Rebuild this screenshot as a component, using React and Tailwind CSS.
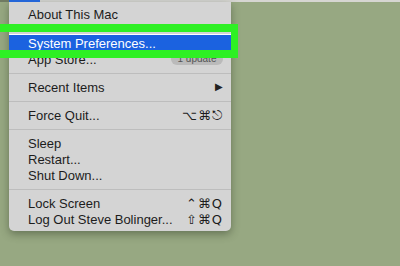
import React from 'react';

const font = { fontFamily: '"Liberation Sans", Arial, sans-serif' };

function Item({ label, right, active }) {
  return (
    <div
      className={`flex items-center justify-between h-4 pl-[19px] pr-[8px] text-[13px] leading-none ${
        active ? 'bg-[#1b62e0] text-white' : 'text-[#1c1c1c]'
      }`}
    >
      <span>{label}</span>
      {right}
    </div>
  );
}

function Sep() {
  return (
    <div className="h-3 flex items-center">
      <div className="h-px w-full bg-[#bdbdbd]" />
    </div>
  );
}

const Keys = ({ children }) => (
  <span
    className="text-[13px] tracking-[1px] text-[#1c1c1c]"
    style={{ fontFamily: '"DejaVu Sans", "Liberation Sans", sans-serif' }}
  >
    {children}
  </span>
);

export default function App() {
  return (
    <div className="relative w-[400px] h-[266px] overflow-hidden bg-[#97a882]" style={font}>
      {/* menu bar edge */}
      <div className="flex h-[2px] bg-[#d6d6d2]">
        <div className="w-[9px] bg-[#6f7a62]" />
        <div className="w-[31px] bg-[#2466d8]" />
      </div>

      {/* Apple menu */}
      <div className="ml-[9px] w-[222px] pt-1 pb-1 bg-[#d4d4d4] rounded-b-[5px] shadow-[0_3px_8px_rgba(40,50,30,0.45)]">
        <Item label="About This Mac" />
        <Sep />
        <div className="border-t border-white">
          <Item label="System Preferences..." active />
        </div>
        <Item
          label="App Store..."
          right={
            <span className="h-3 w-[52px] rounded-full bg-[#bababa] text-[10px] leading-3 text-center text-[#555]">
              1 update
            </span>
          }
        />
        <Sep />
        <Item label="Recent Items" right={<span className="text-[10px] text-[#222]">▶</span>} />
        <Sep />
        <Item label="Force Quit..." right={<Keys>⌥⌘⎋</Keys>} />
        <Sep />
        <Item label="Sleep" />
        <Item label="Restart..." />
        <Item label="Shut Down..." />
        <Sep />
        <Item label="Lock Screen" right={<Keys>⌃⌘Q</Keys>} />
        <Item label="Log Out Steve Bolinger..." right={<Keys>⇧⌘Q</Keys>} />
      </div>

      {/* green annotation frame */}
      <div className="absolute left-[-10px] top-[24px] w-[248px] h-[34px] border-[8px] border-r-[7px] border-[#2ef024]" />
    </div>
  );
}
